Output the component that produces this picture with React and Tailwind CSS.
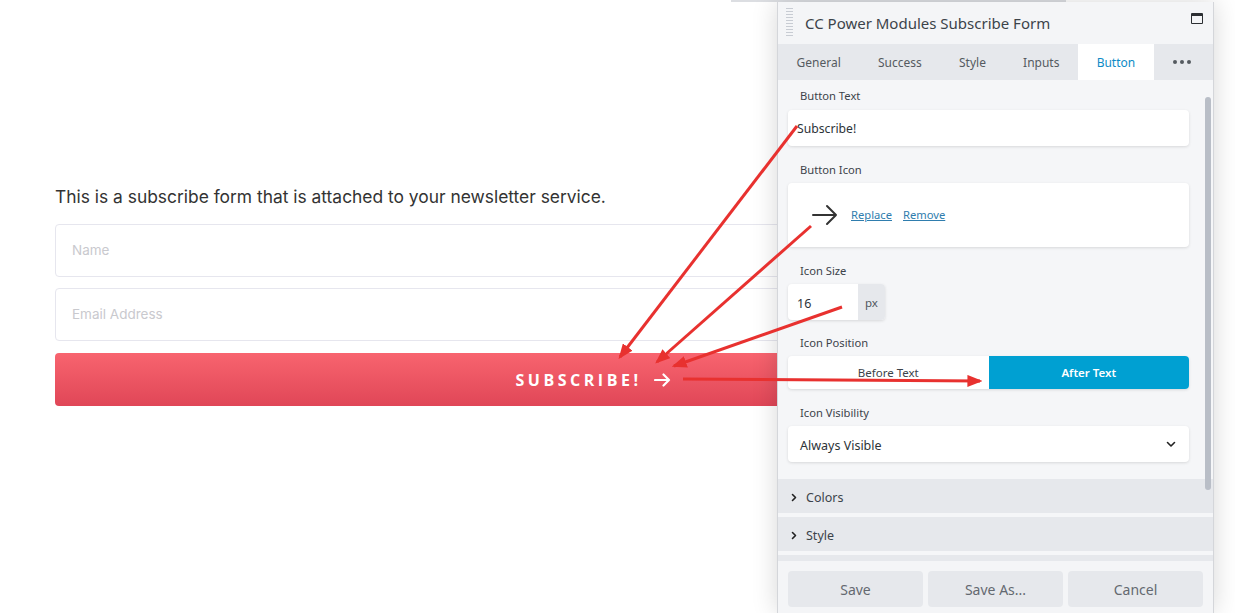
import React from "react";

const Label = ({ children, className = "" }) => (
  <div className={`h-4 pl-3 text-[11.2px] leading-4 text-[#3c434a] ${className}`}>{children}</div>
);

const fieldCls = "bg-white rounded-[4px] shadow-[0_1px_3px_rgba(0,0,0,0.12)]";

function Panel() {
  const tabs = ["General", "Success", "Style", "Inputs"];
  return (
    <div
      className="absolute left-[777px] top-[2px] w-[437px] h-[611px] flex flex-col bg-[#f5f6f8] border-x border-[#d4d6da] shadow-[0_0_24px_rgba(0,0,0,0.16)] font-['Noto_Sans',sans-serif]"
    >
      {/* header */}
      <div className="h-[42px] flex items-center bg-[#f4f5f7] relative shrink-0">
        <div className="ml-[8px] w-[7px] h-[30px] bg-[repeating-linear-gradient(to_bottom,#c8ccd3_0px,#c8ccd3_1.5px,transparent_1.5px,transparent_3px)]" />
        <div className="ml-[12px] text-[15px] text-[#3c434a] leading-5">CC Power Modules Subscribe Form</div>
        <div className="ml-auto mr-[10px] mb-[10px] w-[12px] h-[11px] border-[1.5px] border-t-[3px] border-[#2c2f33] rounded-[1px]" />
      </div>
      {/* tabs */}
      <div className="h-[36px] flex items-stretch bg-[#e6e8ec] shrink-0 text-[12px] text-[#555a60]">
        {tabs.map((t) => (
          <div key={t} className="px-[18.6px] pt-[2px] flex items-center">{t}</div>
        ))}
        <div className="px-[18.6px] pt-[2px] flex items-center bg-white text-[#0e8bc6]">Button</div>
        <div className="flex-1 flex items-center justify-center gap-[3px] pr-[2px]">
          <span className="w-[4px] h-[4px] rounded-full bg-[#555a60]" />
          <span className="w-[4px] h-[4px] rounded-full bg-[#555a60]" />
          <span className="w-[4px] h-[4px] rounded-full bg-[#555a60]" />
        </div>
      </div>
      {/* content */}
      <div className="flex-1 relative overflow-hidden">
        <div className="pl-[10px] pr-[24px] pt-[8px]">
          <Label className="mb-[6px]">Button Text</Label>
          <div className={`${fieldCls} h-[36px] flex items-center pl-[9px] pt-[2px] text-[12.2px] text-[#2c3338]`}>Subscribe!</div>

          <Label className="mt-[16px] mb-[5px]">Button Icon</Label>
          <div className={`${fieldCls} h-[64px] flex items-center pl-[24px]`}>
            <svg width="26" height="22" viewBox="0 0 26 22" fill="none" stroke="#333" strokeWidth="2" strokeLinecap="round" strokeLinejoin="round">
              <path d="M1 11h23M15 2l9 9-9 9" />
            </svg>
            <span className="ml-[13px] text-[11.2px] underline text-[#2f7dae]">Replace</span>
            <span className="ml-[11px] text-[11.2px] underline text-[#2f7dae]">Remove</span>
          </div>

          <Label className="mt-[16px] mb-[5px]">Icon Size</Label>
          <div className={`${fieldCls} h-[36px] w-[97px] flex overflow-hidden`}>
            <div className="w-[70px] flex items-center pl-[9px] pt-[4px] text-[12.5px] text-[#2c3338]">16</div>
            <div className="flex-1 bg-[#e6e8ec] flex items-center justify-center pt-[1px] text-[11.5px] text-[#50575e]">px</div>
          </div>

          <Label className="mt-[15px] mb-[5px]">Icon Position</Label>
          <div className={`${fieldCls} h-[33px] grid grid-cols-2 overflow-hidden text-[11.5px]`}>
            <div className="flex items-center justify-center pt-[1px] text-[#3c434a]">Before Text</div>
            <div className="flex items-center justify-center pt-[1px] bg-[#00a0d2] text-white font-semibold">After Text</div>
          </div>

          <Label className="mt-[16px] mb-[5px]">Icon Visibility</Label>
          <div className={`${fieldCls} h-[36px] flex items-center pl-[12px] pr-[13px] text-[12.5px] text-[#2c3338]`}>
            <span className="pt-[4px]">Always Visible</span>
            <svg className="ml-auto" width="10" height="7" viewBox="0 0 10 7" fill="none" stroke="#222" strokeWidth="1.6" strokeLinecap="round" strokeLinejoin="round">
              <path d="M1.5 1.5L5 5l3.5-3.5" />
            </svg>
          </div>
        </div>

        <div className="mt-[17px] flex flex-col gap-[4px]">
          {["Colors", "Style", ""].map((s, i) => (
            <div key={i} className="h-[34px] bg-[#e6e8ec] flex items-center pl-[13px] text-[12.5px] text-[#3c434a]">
              {s && (
                <>
                  <svg className="mt-[2px]" width="6" height="9" viewBox="0 0 6 9" fill="none" stroke="#222" strokeWidth="1.6" strokeLinecap="round" strokeLinejoin="round">
                    <path d="M1.5 1.5L4.5 4.5 1.5 7.5" />
                  </svg>
                  <span className="ml-[9px] pt-[5px]">{s}</span>
                </>
              )}
            </div>
          ))}
        </div>

        {/* scrollbar */}
        <div className="absolute right-[2px] top-[17px] w-[6px] h-[393px] rounded-full bg-[#b9bec7]" />
      </div>
      {/* footer */}
      <div className="h-[52px] shrink-0 bg-[#f4f5f7] px-[10px] pt-[10px] grid grid-cols-3 gap-[5px] items-start">
        {["Save", "Save As...", "Cancel"].map((b) => (
          <div key={b} className="h-[36px] rounded-[4px] bg-[#e6e8ec] flex items-center justify-center text-[14px] text-[#646970]">
            {b}
          </div>
        ))}
      </div>
    </div>
  );
}

function Arrows() {
  return (
    <svg className="absolute left-0 top-0 pointer-events-none" width="1235" height="613" viewBox="0 0 1235 613">
      <defs>
        <marker id="ah" markerWidth="5" markerHeight="4" refX="4.2" refY="2" orient="auto" markerUnits="strokeWidth">
          <path d="M0 0L5 2L0 4z" fill="#e8312f" />
        </marker>
      </defs>
      <g stroke="#e8312f" strokeWidth="3" fill="none" markerEnd="url(#ah)">
        <line x1="797" y1="126" x2="620" y2="357" />
        <line x1="811" y1="226" x2="657" y2="362" />
        <line x1="842" y1="307" x2="674" y2="366" />
        <line x1="683" y1="379" x2="980" y2="381" />
      </g>
    </svg>
  );
}

export default function App() {
  return (
    <div className="relative w-[1235px] h-[613px] bg-white overflow-hidden">
      <div className="absolute left-[731px] top-0 w-[335px] h-[2px] bg-[#dcdee2]" />
      <div className="pl-[55px] pt-[185px] w-[1131px] font-['Inter',sans-serif]">
        <p className="text-[17.4px] leading-6 text-[#333]">
          This is a subscribe form that is attached to your newsletter service.
        </p>
        <div className="mt-[15px] h-[53px] border border-[#e6e6ee] rounded-[4px] flex items-center pl-[16px] text-[13.5px] text-[#c9c9ce]">
          Name
        </div>
        <div className="mt-[11px] h-[53px] border border-[#e6e6ee] rounded-[4px] flex items-center pl-[16px] text-[13.5px] text-[#c9c9ce]">
          Email Address
        </div>
        <div className="mt-[12px] h-[53px] rounded-[4px] bg-gradient-to-b from-[#f8646f] to-[#e04657] flex items-center justify-center text-white">
          <span className="font-['Open_Sans',sans-serif] font-bold text-[16px] tracking-[0.22em]">SUBSCRIBE!</span>
          <svg className="ml-[12px]" width="17" height="14" viewBox="0 0 17 14" fill="none" stroke="white" strokeWidth="2.2" strokeLinecap="round" strokeLinejoin="round">
            <path d="M1 7h14M9.5 1.5L15 7l-5.5 5.5" />
          </svg>
        </div>
      </div>
      <Panel />
      <Arrows />
    </div>
  );
}
